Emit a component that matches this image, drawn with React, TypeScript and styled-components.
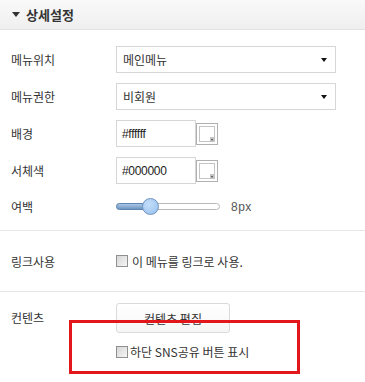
import styled, { createGlobalStyle } from 'styled-components';

const GlobalStyle = createGlobalStyle`
  html, body {
    margin: 0;
    padding: 0;
    background: #fff;
  }
  body {
    font-family: "Noto Sans CJK KR", "DejaVu Sans", sans-serif;
    font-size: 12px;
    color: #333;
  }
`;

const Panel = styled('div')`
  position: relative;
  width: 365px;
  height: 382px;
  overflow: hidden;
`;

const Header = styled('div')`
  height: 29px;
  display: flex;
  align-items: center;
  gap: 6px;
  padding-left: 12px;
  background: linear-gradient(#f9f9f9, #efefef);
  border-bottom: 1px solid #e3e3e3;
  font-size: 13px;
  font-weight: bold;
  color: #333;
`;

const Caret = styled('span')`
  width: 0;
  height: 0;
  border-left: 4px solid transparent;
  border-right: 4px solid transparent;
  border-top: 5px solid #333;
`;

const Section = styled('div')<{ $top: number; $bottom: number; $last?: boolean }>`
  display: flex;
  flex-direction: column;
  gap: 10px;
  padding: ${(p) => p.$top}px 0 ${(p) => p.$bottom}px 11px;
  border-bottom: ${(p) => (p.$last ? 'none' : '1px solid #e6e6e6')};
`;

const Row = styled('div')<{ $h?: number }>`
  display: flex;
  align-items: center;
  height: ${(p) => p.$h ?? 27}px;
`;

const Label = styled('div')`
  width: 105px;
  flex-shrink: 0;
  color: #333;
`;

const Select = styled('div')`
  box-sizing: border-box;
  width: 220px;
  height: 27px;
  border: 1px solid #d6d6d6;
  display: flex;
  align-items: center;
  justify-content: space-between;
  padding: 0 8px 0 6px;
  background: #fff;
`;

const Arrow = styled('span')`
  width: 0;
  height: 0;
  border-left: 3.5px solid transparent;
  border-right: 3.5px solid transparent;
  border-top: 4px solid #111;
`;

const TextInput = styled('div')`
  box-sizing: border-box;
  width: 80px;
  height: 27px;
  border: 1px solid #d6d6d6;
  display: flex;
  align-items: center;
  padding-left: 5px;
  font-family: "Liberation Sans", Arial, sans-serif;
  font-size: 12px;
  letter-spacing: -0.3px;
  color: #222;
`;

const Swatch = styled('div')`
  position: relative;
  box-sizing: border-box;
  width: 22px;
  height: 22px;
  border: 1px solid #b0b0b0;
  padding: 2px;
  background: #fff;
`;

const SwatchInner = styled('div')<{ $color: string }>`
  box-sizing: border-box;
  width: 100%;
  height: 100%;
  border: 1px solid #c4c4c4;
  background: ${(p) => p.$color};
`;

const SwatchCorner = styled('span')`
  position: absolute;
  right: 2px;
  bottom: 2px;
  width: 5px;
  height: 5px;
  background: #c4c4c4;
  &::after {
    content: '';
    position: absolute;
    left: 1px;
    top: 2px;
    border-left: 1.5px solid transparent;
    border-right: 1.5px solid transparent;
    border-top: 2px solid #444;
  }
`;

const Track = styled('div')`
  position: relative;
  box-sizing: border-box;
  width: 104px;
  height: 7px;
  border: 1px solid #b8b8b8;
  border-radius: 4px;
  background: #fff;
`;

const Fill = styled('div')`
  position: absolute;
  left: -1px;
  top: -1px;
  bottom: -1px;
  border-radius: 4px 0 0 4px;
  background: linear-gradient(#a9c6e6, #6f95c2);
  border: 1px solid #5e84b0;
`;

const Thumb = styled('div')`
  position: absolute;
  top: 50%;
  width: 17px;
  height: 17px;
  margin-left: -8px;
  margin-top: -8.5px;
  border-radius: 50%;
  box-sizing: border-box;
  border: 1px solid #6f93bd;
  background: radial-gradient(circle at 40% 35%, #c5defa, #95bfee);
`;

const SliderValue = styled('span')`
  margin-left: 11px;
  padding-top: 2px;
  color: #555;
  font-family: "Liberation Sans", Arial, sans-serif;
  font-size: 12px;
  letter-spacing: 0.5px;
`;

const Check = styled('label')<{ $gap?: number }>`
  display: flex;
  align-items: center;
  gap: ${(p) => p.$gap ?? 4}px;
  color: #333;
`;

const Box = styled('span')`
  box-sizing: border-box;
  width: 12px;
  height: 12px;
  border: 1px solid #909090;
  background: linear-gradient(135deg, #d6d6d6, #f6f6f6);
`;

const Button = styled('div')`
  box-sizing: border-box;
  width: 114px;
  height: 30px;
  border: 1px solid #dadada;
  border-radius: 3px;
  background: linear-gradient(#fff, #f6f6f6);
  display: flex;
  align-items: center;
  justify-content: center;
  color: #333;
`;

const ContentRow = styled('div')`
  display: flex;
  align-items: flex-start;
`;

const ContentLabel = styled(Label)`
  padding-top: 6px;
`;

const ContentColumn = styled('div')`
  display: flex;
  flex-direction: column;
  gap: 10px;
`;

const Highlight = styled('div')`
  position: absolute;
  left: 69px;
  top: 320px;
  width: 231px;
  height: 54px;
  box-sizing: border-box;
  border: 3px solid #e3161b;
  pointer-events: none;
`;

const App = () => {
  const margin = 8;
  const pct = (margin / 25) * 100;

  return (
    <Panel>
      <GlobalStyle />
      <Header>
        <Caret />
        상세설정
      </Header>

      <Section $top={16} $bottom={12}>
        <Row>
          <Label>메뉴위치</Label>
          <Select>
            메인메뉴
            <Arrow />
          </Select>
        </Row>
        <Row>
          <Label>메뉴권한</Label>
          <Select>
            비회원
            <Arrow />
          </Select>
        </Row>
        <Row>
          <Label>배경</Label>
          <TextInput>#ffffff</TextInput>
          <Swatch>
            <SwatchInner $color="#ffffff" />
            <SwatchCorner />
          </Swatch>
        </Row>
        <Row>
          <Label>서체색</Label>
          <TextInput>#000000</TextInput>
          <Swatch>
            <SwatchInner $color="#ffffff" />
            <SwatchCorner />
          </Swatch>
        </Row>
        <Row $h={24}>
          <Label>여백</Label>
          <Track>
            <Fill style={{ width: `${pct}%` }} />
            <Thumb style={{ left: `${pct}%` }} />
          </Track>
          <SliderValue>{margin}px</SliderValue>
        </Row>
      </Section>

      <Section $top={17} $bottom={17}>
        <Row $h={26}>
          <Label>링크사용</Label>
          <Check>
            <Box />이 메뉴를 링크로 사용.
          </Check>
        </Row>
      </Section>

      <Section $top={11} $bottom={0} $last>
        <ContentRow>
          <ContentLabel>컨텐츠</ContentLabel>
          <ContentColumn>
            <Button>컨텐츠 편집</Button>
            <Check $gap={2}>
              <Box />하단 SNS공유 버튼 표시
            </Check>
          </ContentColumn>
        </ContentRow>
      </Section>

      <Highlight />
    </Panel>
  );
};

export default App;
